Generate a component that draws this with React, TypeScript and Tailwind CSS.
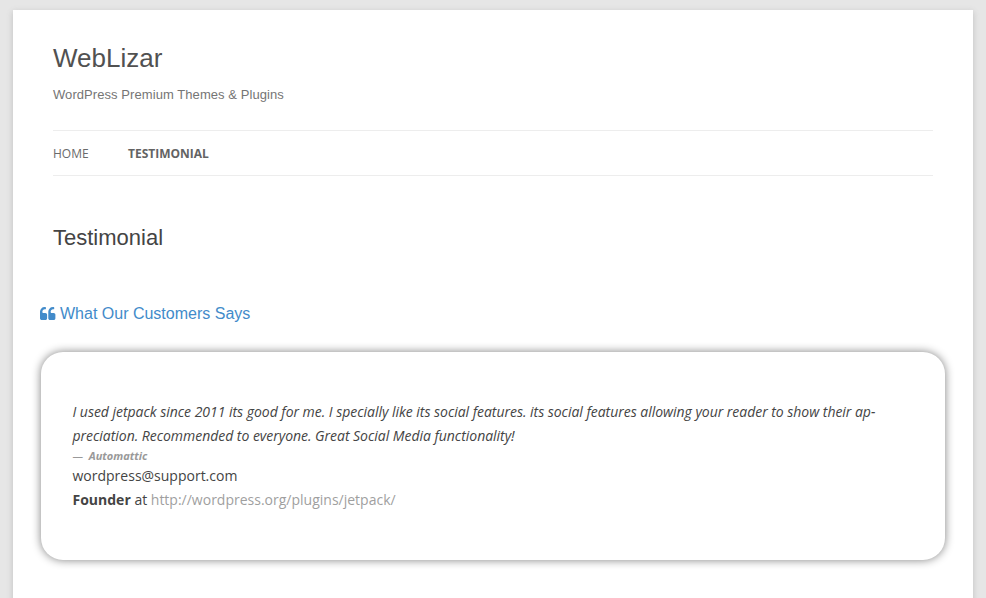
const sans = "font-['Liberation_Sans',sans-serif]";

function QuoteIcon() {
  return (
    <svg className="mb-[2px] h-[13px] w-[15.4px]" viewBox="0 128 1664 1408" preserveAspectRatio="none" fill="currentColor" aria-hidden="true">
      <path
        id="mark"
        d="M768 960v384q0 80-56 136t-136 56h-384q-80 0-136-56t-56-136v-704q0-104 40.500-198.500t109.500-163.500 163.500-109.500 198.500-40.500h64q26 0 45 19t19 45v128q0 26-19 45t-45 19h-64q-106 0-181 75t-75 181v32q0 40 28 68t68 28h224q80 0 136 56t56 136z"
      />
      <use href="#mark" x="896" />
    </svg>
  );
}

function Header() {
  return (
    <header className={sans}>
      <h1 className="text-[26px] leading-[31px] text-[#515151]">WebLizar</h1>
      <h2 className="mt-[9px] text-[13px] leading-6 tracking-[0.07px] text-[#757575]">WordPress Premium Themes &amp; Plugins</h2>
    </header>
  );
}

function Nav() {
  return (
    <nav className="mt-[23px] flex h-[46px] items-center gap-[39.4px] border-y border-[#ededed] pt-px text-[12px] text-[#6a6a6a]">
      <a href="#home">HOME</a>
      <a href="#testimonial" className="font-bold text-[#636363]">TESTIMONIAL</a>
    </nav>
  );
}

function Quote() {
  return (
    <section className="-mx-3 mt-[26px] h-[208px] rounded-[22px] bg-white pl-[31.5px] pt-12 text-[14px] leading-6 text-[#444] shadow-[0_0_10px_#808080]">
      <p className="whitespace-nowrap italic tracking-[-0.029px]">
        I used jetpack since 2011 its good for me. I specially like its social features. its social features allowing your reader to show their ap-
        <br />
        preciation. Recommended to everyone. Great Social Media functionality!
      </p>
      <p className="text-[11px] italic leading-4 text-[#999]">
        —&nbsp; <strong>Automattic</strong>
      </p>
      <p>wordpress@support.com</p>
      <p>
        <strong>Founder</strong> at <a href="#jetpack" className="text-[#9f9f9f]">http://wordpress.org/plugins/jetpack/</a>
      </p>
    </section>
  );
}

export default function App() {
  return (
    <div className="h-[598px] overflow-hidden bg-[#e6e6e6] pt-[10px] font-['Open_Sans',sans-serif]">
      <main className="mx-[13px] h-[620px] bg-white px-10 pt-[33px] shadow-[0_2px_6px_rgba(100,100,100,0.3)]">
        <Header />
        <Nav />
        <h2 className={`mt-[48px] text-[22px] leading-[27px] text-[#444] ${sans}`}>Testimonial</h2>
        <h3 className={`-ml-[12.7px] mt-[51px] flex items-center gap-[4.300px] text-[16px] leading-6 text-[#428bca] ${sans}`}>
          <QuoteIcon />
          What Our Customers Says
        </h3>
        <Quote />
      </main>
    </div>
  );
}
